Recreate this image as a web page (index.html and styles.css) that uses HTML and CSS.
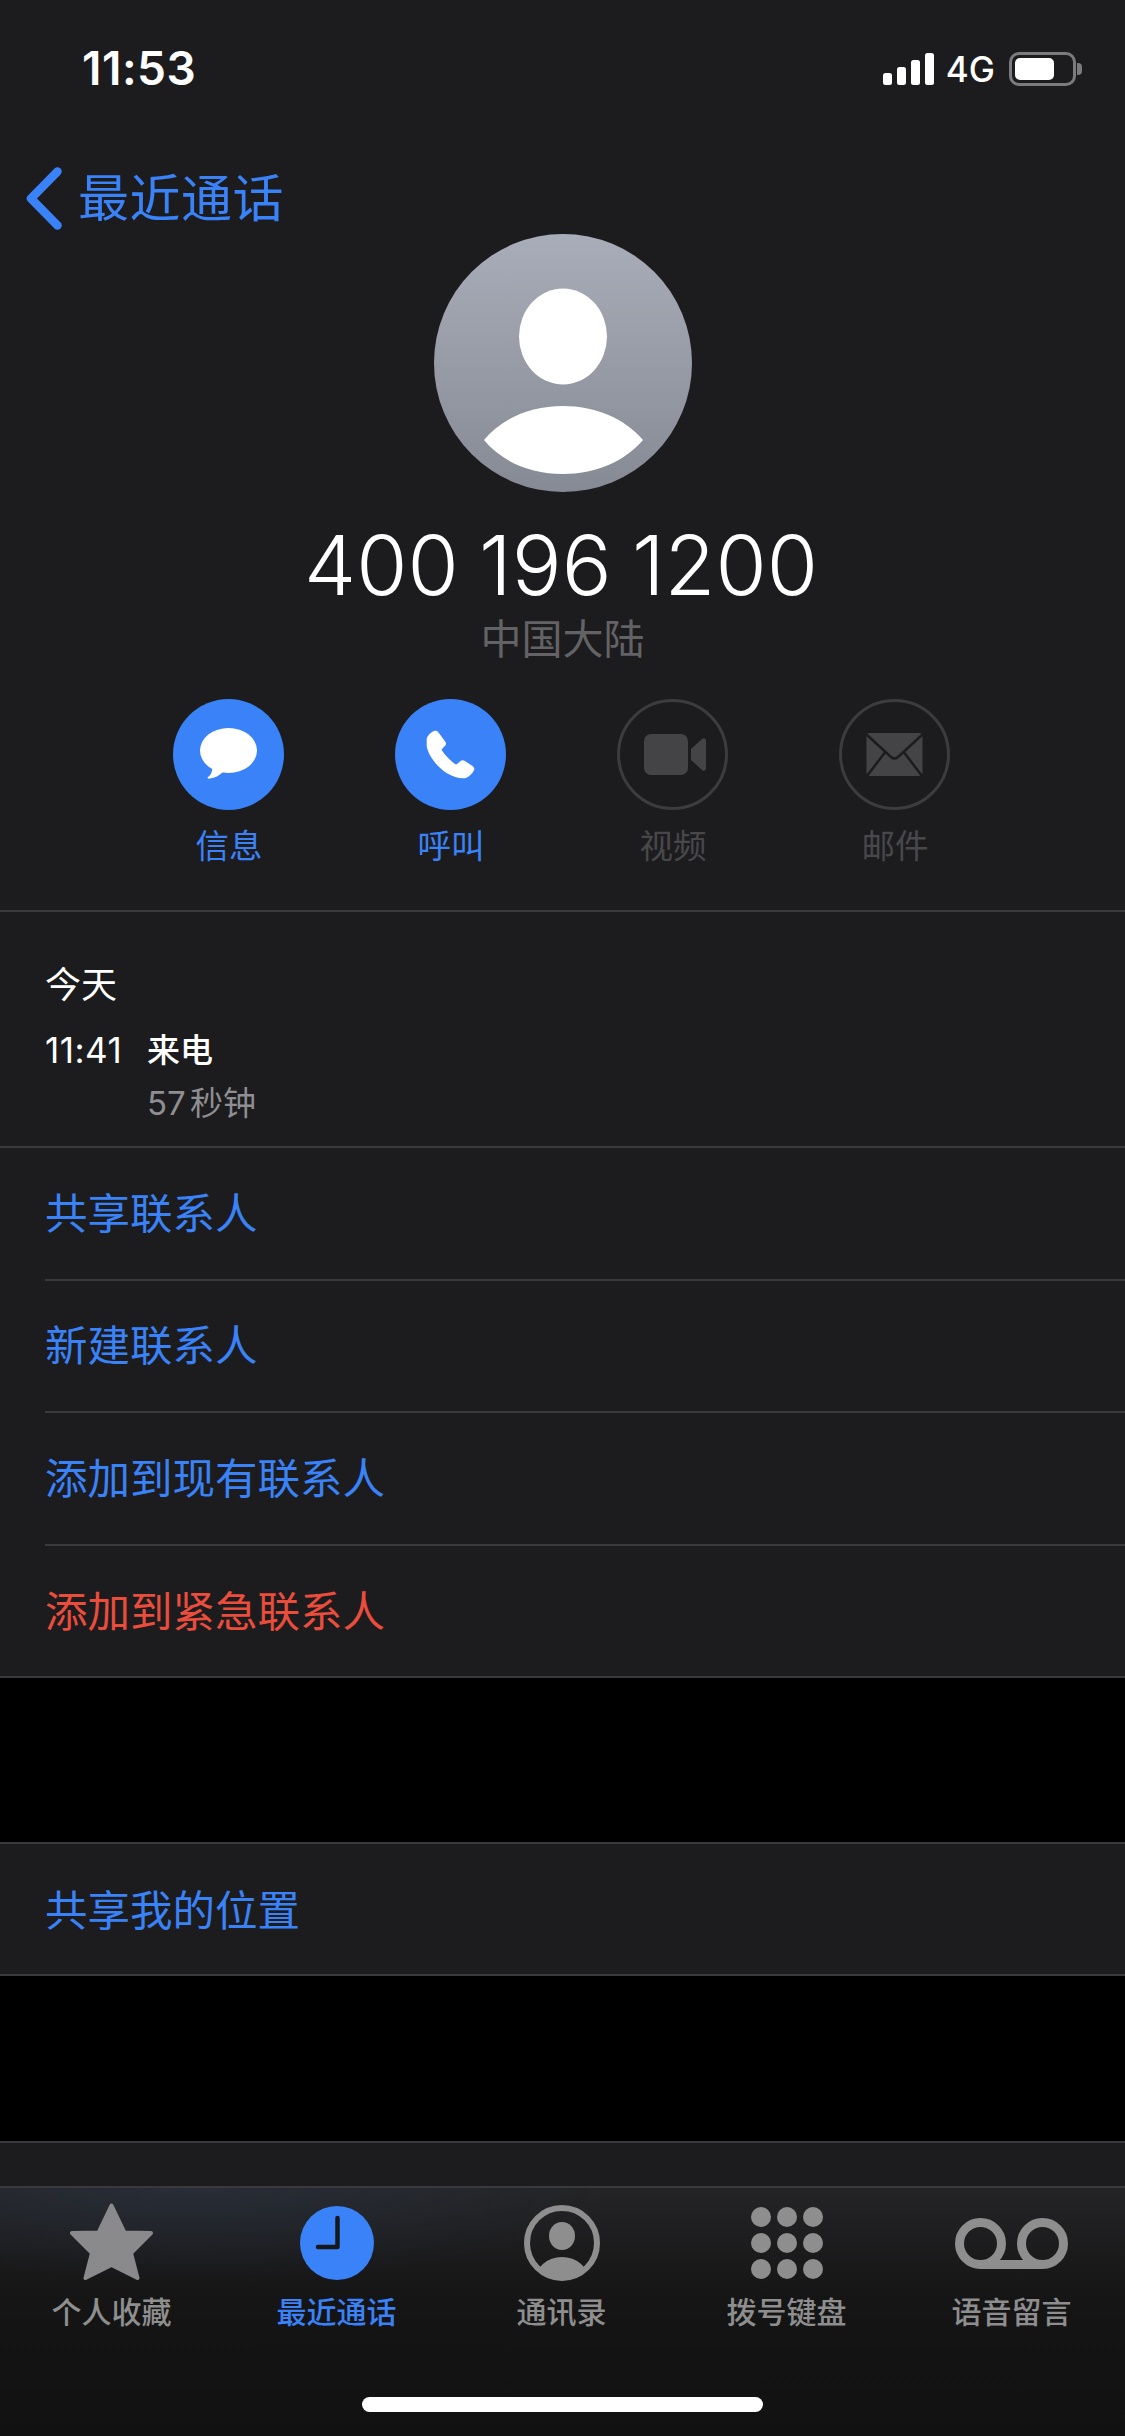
FILE: index.html
```html
<!DOCTYPE html>
<html lang="zh-CN">
  <head>
    <meta charset="UTF-8">
    <meta name="viewport" content="width=device-width, initial-scale=1.0">
    <title>400 196 1200</title>
    <link rel="stylesheet" href="styles.css">
  </head>
  <body>
    <div class="screen">
        <div class="status-bar">
            <div class="clock">11:53</div>
            <div class="status-right">
                <div class="signal">
                    <i class="bar bar-1"></i>
                    <i class="bar bar-2"></i>
                    <i class="bar bar-3"></i>
                    <i class="bar bar-4"></i>
                </div>
                <div class="network">4G</div>
                <div class="battery">
                    <div class="battery-body"><div class="battery-level"></div></div>
                    <div class="battery-cap"></div>
                </div>
            </div>
        </div>

        <div class="nav">
            <svg class="chevron" viewBox="0 0 36 63" width="36" height="63">
                <path d="M31.500 4.500 L5 31.500 L31.500 58.500" fill="none" stroke="#3a82f7" stroke-width="8.500" stroke-linecap="round" stroke-linejoin="round"/>
            </svg>
            <span class="nav-back">最近通话</span>
        </div>

        <div class="caller">
            <svg class="avatar" viewBox="0 0 258 258" width="258" height="258">
                <defs>
                    <linearGradient id="avatarFill" x1="0" y1="0" x2="0" y2="1">
                        <stop offset="0" stop-color="#a9adb9"/>
                        <stop offset="1" stop-color="#858a94"/>
                    </linearGradient>
                </defs>
                <circle cx="129" cy="129" r="129" fill="url(#avatarFill)"/>
                <ellipse cx="129" cy="102.500" rx="44" ry="48" fill="#fff"/>
                <path d="M50 206 C68 184 97 172 129 172 C161 172 190 184 209 206 C190 228 161 240 129 240 C97 240 68 228 50 206 Z" fill="#fff"/>
            </svg>
            <div class="phone-number">400 196 1200</div>
            <div class="phone-region">中国大陆</div>
        </div>

        <div class="actions">
            <div class="action">
                <svg class="action-icon" viewBox="0 0 111 111" width="111" height="111">
                    <circle cx="55.500" cy="55.500" r="55.500" fill="#3a82f7"/>
                    <ellipse cx="55.500" cy="51.500" rx="28.500" ry="22.500" fill="#fff"/>
                    <path d="M39 66 C40 72 38 76 35 78 C34 79 35 80 37 79.500 C42 79 46 76.500 50 73 Z" fill="#fff"/>
                </svg>
                <span class="action-label">信息</span>
            </div>
            <div class="action">
                <svg class="action-icon" viewBox="0 0 111 111" width="111" height="111">
                    <circle cx="55.500" cy="55.500" r="55.500" fill="#3a82f7"/>
                    <path d="M31.700 40 C32 37 36 33 39 32 C41 31.500 42.500 32 43.500 33.500 L50.500 43 C51.300 44.500 51 45.800 50 46.800 L47 50 C46.500 50.500 46.500 51 47 51.500 C49.500 55.500 56 62 60 65 C60.700 65.500 61.300 65.500 62 65 L65 62.500 C66.500 61 68 60.800 69.500 61.800 L77.500 67 C79.300 68.200 79.700 70 79 71.300 C77 75 74 78 71 79 C66 80 59 78.500 51.500 74 C42 68 33 56 31.700 47 Z" fill="#fff"/>
                </svg>
                <span class="action-label">呼叫</span>
            </div>
            <div class="action is-disabled">
                <svg class="action-icon" viewBox="0 0 111 111" width="111" height="111">
                    <circle cx="55.500" cy="55.500" r="54" fill="none" stroke="#3c3c3f" stroke-width="3"/>
                    <rect x="27" y="35" width="44" height="41" rx="7" fill="#444447"/>
                    <path d="M74 50 L85 40 C87 38.500 89 39.500 89 42 V69 C89 71.500 87 72.500 85 71 L74 61 Z" fill="#444447"/>
                </svg>
                <span class="action-label">视频</span>
            </div>
            <div class="action is-disabled">
                <svg class="action-icon" viewBox="0 0 111 111" width="111" height="111">
                    <circle cx="55.500" cy="55.500" r="54" fill="none" stroke="#3c3c3f" stroke-width="3"/>
                    <rect x="27.500" y="34" width="56" height="43" rx="3" fill="#444447"/>
                    <path d="M27 35 L52 58 Q55.500 61 59 58 L84 35 M28 77 L47 52 M83 77 L64 52" fill="none" stroke="#1c1c1e" stroke-width="2.500"/>
                </svg>
                <span class="action-label">邮件</span>
            </div>
        </div>

        <div class="recents">
            <div class="recents-day">今天</div>
            <div class="call-row">
                <div class="call-time">11:41</div>
                <div class="call-type">来电</div>
            </div>
            <div class="call-duration">57 秒钟</div>
        </div>

        <div class="group">
            <div class="group-row"><div class="group-text">共享联系人</div></div>
            <div class="group-row"><div class="group-text">新建联系人</div></div>
            <div class="group-row"><div class="group-text">添加到现有联系人</div></div>
            <div class="group-row is-last"><div class="group-text danger">添加到紧急联系人</div></div>
        </div>

        <div class="gap"></div>

        <div class="group">
            <div class="group-row is-last"><div class="group-text">共享我的位置</div></div>
        </div>

        <div class="gap"></div>
        <div class="peek-row"></div>

        <div class="tabbar">
            <div class="tabs">
                <div class="tab">
                    <div class="tab-icon">
                        <svg class="star" viewBox="0 0 83 77" width="83" height="77">
                            <path d="M41.500 2.500 L54.500 29.500 L81 30 L61 50 L67.500 75 L41.500 62 L15.500 75 L22 50 L2 30 L28.500 29.500 Z" fill="#8a8a8d" stroke="#8a8a8d" stroke-width="4" stroke-linejoin="round"/>
                        </svg>
                    </div>
                    <span class="tab-label">个人收藏</span>
                </div>
                <div class="tab is-active">
                    <div class="tab-icon">
                        <svg viewBox="0 0 74 74" width="74" height="74">
                            <circle cx="37" cy="37" r="37" fill="#3a82f7"/>
                            <path d="M37.500 12 V41 H18" fill="none" stroke="#16181c" stroke-width="4.500" stroke-linecap="round" stroke-linejoin="round"/>
                        </svg>
                    </div>
                    <span class="tab-label">最近通话</span>
                </div>
                <div class="tab">
                    <div class="tab-icon">
                        <svg viewBox="0 0 76 76" width="76" height="76">
                            <defs>
                                <clipPath id="contactClip"><circle cx="38" cy="38" r="35"/></clipPath>
                            </defs>
                            <circle cx="38" cy="38" r="35" fill="none" stroke="#8e8e8e" stroke-width="6"/>
                            <ellipse cx="38" cy="31" rx="13" ry="14" fill="#8e8e8e"/>
                            <ellipse cx="38" cy="76" rx="27" ry="24" fill="#8e8e8e" clip-path="url(#contactClip)"/>
                        </svg>
                    </div>
                    <span class="tab-label">通讯录</span>
                </div>
                <div class="tab">
                    <div class="tab-icon">
                        <div class="keypad">
                            <i></i><i></i><i></i>
                            <i></i><i></i><i></i>
                            <i></i><i></i><i></i>
                        </div>
                    </div>
                    <span class="tab-label">拨号键盘</span>
                </div>
                <div class="tab">
                    <div class="tab-icon">
                        <svg viewBox="0 0 113 51" width="113" height="51">
                            <circle cx="25.500" cy="25.500" r="21" fill="none" stroke="#8e8e8e" stroke-width="9"/>
                            <circle cx="87.500" cy="25.500" r="21" fill="none" stroke="#8e8e8e" stroke-width="9"/>
                            <path d="M25.500 46.500 H87.500" stroke="#8e8e8e" stroke-width="9"/>
                        </svg>
                    </div>
                    <span class="tab-label">语音留言</span>
                </div>
            </div>
            <div class="home-indicator"></div>
        </div>
    </div>
  </body>
</html>
```

FILE: styles.css
```css
html, body {
    margin: 0;
    padding: 0;
    background: #000;
}

.screen {
    width: 1125px;
    height: 2436px;
    overflow: hidden;
    display: flex;
    flex-direction: column;
    background: #1c1c1e;
    color: #fff;
    font-family: Inter, "Noto Sans CJK SC", sans-serif;
}

.status-bar {
    height: 136px;
    padding: 0 43px 0 82px;
    display: flex;
    align-items: center;
    justify-content: space-between;
    box-sizing: border-box;
}

.clock {
    font-size: 46px;
    font-weight: 600;
    letter-spacing: 0.5px;
}

.status-right {
    display: flex;
    align-items: center;
    padding-top: 2px;
}

.signal {
    display: flex;
    align-items: flex-end;
    gap: 5px;
    height: 32px;
    margin-right: 12px;
}

.bar {
    width: 9px;
    background: #fff;
    border-radius: 2.5px;
}

.bar-1 { height: 12px; }
.bar-2 { height: 18px; }
.bar-3 { height: 25px; }
.bar-4 { height: 32px; }

.network {
    font-size: 35px;
    font-weight: 500;
    margin-right: 14px;
}

.battery {
    display: flex;
    align-items: center;
}

.battery-body {
    width: 67px;
    height: 34px;
    padding: 3px;
    border: 3px solid #7b7b7d;
    border-radius: 10px;
    box-sizing: border-box;
}

.battery-level {
    width: 39px;
    height: 100%;
    background: #fff;
    border-radius: 5px;
}

.battery-cap {
    width: 5px;
    height: 12px;
    margin-left: 1px;
    background: #7b7b7d;
    border-radius: 0 4px 4px 0;
}

.nav {
    height: 94px;
    padding: 31px 0 0 26px;
    display: flex;
    align-items: center;
    box-sizing: border-box;
}

.chevron {
    display: block;
    margin-right: 16px;
}

.nav-back {
    font-size: 51px;
    line-height: 63px;
    letter-spacing: 0.5px;
    color: #3a82f7;
}

.caller {
    margin-top: 4px;
    display: flex;
    flex-direction: column;
    align-items: center;
}

.avatar {
    display: block;
}

.phone-number {
    margin-top: 23px;
    padding-right: 3px;
    font-size: 83px;
    font-weight: 300;
    line-height: 100px;
    word-spacing: -3px;
}

.phone-region {
    font-size: 41px;
    line-height: 50px;
    color: #636366;
    margin-top: -1px;
}

.actions {
    margin-top: 35px;
    padding: 0 2px 44px 0;
    display: flex;
    justify-content: center;
    border-bottom: 2px solid #3a3a3c;
}

.action {
    width: 222px;
    display: flex;
    flex-direction: column;
    align-items: center;
}

.action-icon {
    display: block;
}

.action-label {
    margin-top: 16px;
    padding-left: 1px;
    font-size: 33.5px;
    line-height: 40px;
    color: #3a82f7;
}

.action.is-disabled .action-label {
    color: #48484a;
}

.recents {
    padding: 50px 46px 0 45px;
    height: 234px;
    box-sizing: border-box;
}

.recents-day {
    font-size: 36px;
    line-height: 46px;
}

.call-row {
    margin-top: 20px;
    display: flex;
    align-items: center;
    line-height: 44px;
}

.call-time {
    width: 102px;
    font-size: 35px;
    letter-spacing: 0.5px;
}

.call-type {
    font-size: 33px;
    font-weight: 500;
}

.call-duration {
    margin-top: 9px;
    margin-left: 102px;
    font-size: 33px;
    line-height: 44px;
    word-spacing: -5px;
    color: #8e8e93;
}

.group {
    border-top: 2px solid #3a3a3c;
    border-bottom: 2px solid #3a3a3c;
}

.group-row {
    padding-left: 45px;
}

.group-text {
    height: 132.5px;
    padding-bottom: 6px;
    display: flex;
    align-items: center;
    font-size: 42.5px;
    color: #3a82f7;
    border-bottom: 2px solid #3a3a3c;
    box-sizing: border-box;
}

.group-row.is-last .group-text {
    border-bottom: 0;
    height: 130px;
    padding-bottom: 4px;
}

.group-text.danger {
    color: #eb4d3d;
}

.gap {
    height: 164.5px;
    background: #000;
}

.peek-row {
    height: 43px;
    border-top: 2px solid #3a3a3c;
}

.tabbar {
    flex: 1;
    border-top: 2px solid #3a3a3c;
    background:
        radial-gradient(ellipse 420px 90px at 190px 0, rgba(50, 70, 100, 0.28), rgba(50, 70, 100, 0) 100%),
        linear-gradient(180deg, #242426 0%, #151516 45%, #111112 100%);
    display: flex;
    flex-direction: column;
}

.tabs {
    margin-left: -1px;
    padding-top: 13px;
    display: grid;
    grid-template-columns: repeat(5, 225px);
}

.tab {
    display: flex;
    flex-direction: column;
    align-items: center;
}

.tab-icon {
    height: 85px;
    display: flex;
    align-items: center;
    justify-content: center;
}

.tab-icon svg {
    display: block;
}

.tab-icon .star {
    margin-top: -3px;
}

.tab-label {
    font-size: 30px;
    font-weight: 500;
    line-height: 40px;
    margin-top: 6px;
    color: #8e8e8e;
}

.tab.is-active .tab-label {
    color: #3a82f7;
}

.keypad {
    display: grid;
    grid-template-columns: repeat(3, 20px);
    grid-auto-rows: 20px;
    gap: 6px;
}

.keypad i {
    background: #8e8e8e;
    border-radius: 50%;
}

.home-indicator {
    width: 401px;
    height: 15px;
    margin: 65px auto 0;
    background: #fff;
    border-radius: 8px;
}
```
